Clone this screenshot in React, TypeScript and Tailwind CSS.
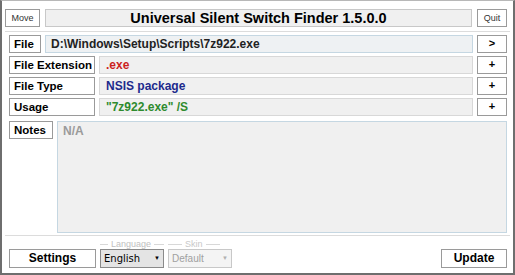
import React from "react";

const font = { fontFamily: '"Liberation Sans", Arial, sans-serif' };

const Label = ({ text, w }: { text: string; w: string }) => (
    <div className={`${w} h-[18px] shrink-0 whitespace-nowrap border border-[#9a9a9a] bg-white px-[4px] text-[11.5px] font-bold leading-[16px] text-black`}>
        {text}
    </div>
);

const SmallBtn = ({ text }: { text: string }) => (
    <div className="w-[30px] h-[18px] shrink-0 border border-[#9a9a9a] bg-white text-center text-[11px] font-bold leading-[15px] text-black">
        {text}
    </div>
);

const rows = [
    { label: "File Extension", value: ".exe", color: "text-[#cc1f1f]" },
    { label: "File Type", value: "NSIS package", color: "text-[#1c2a8c]" },
    { label: "Usage", value: "\"7z922.exe\" /S", color: "text-[#2e8b2e]" },
];

export default function App() {
    return (
        <div style={font} className="w-[515px] h-[275px] bg-white border-t border-t-[#b8b8b8] border-x-2 border-b-2 border-[#6e6e6e] flex flex-col">
            {/* title bar */}
            <div className="flex items-center gap-[5px] pl-[3px] pr-[6px] pt-[8px]">
                <div className="w-[35px] h-[18px] border border-[#9a9a9a] bg-white text-center text-[9px] leading-[16px] text-[#333]">Move</div>
                <div className="flex-1 h-[18px] border border-[#c8c8c8] bg-[#f0f0f0] text-center text-[14.5px] font-bold leading-[16px] text-black">
                    Universal Silent Switch Finder 1.5.0.0
                </div>
                <div className="w-[30px] h-[18px] border border-[#9a9a9a] bg-white text-center text-[9px] leading-[16px] text-[#333]">Quit</div>
            </div>
            <div className="mx-[3px] mt-[4px] border-t border-[#dcdcdc]"></div>

            {/* fields */}
            <div className="flex flex-col gap-[3px] pl-[7px] pr-[6px] pt-[3px]">
                <div className="flex items-center gap-[4px]">
                    <Label text="File" w="w-[32px]" />
                    <div className="flex-1 h-[18px] border border-[#c5d7e2] bg-[#eef1f3] px-[5px] text-[12px] font-bold leading-[16px] text-[#222]">
                        D:\Windows\Setup\Scripts\7z922.exe
                    </div>
                    <SmallBtn text=">" />
                </div>
                {rows.map((r, i) => (
                    <div key={i} className="flex items-center gap-[4px]">
                        <Label text={r.label} w="w-[86px]" />
                        <div className={`flex-1 h-[18px] border border-[#d8d8d8] bg-[#f0f0f0] px-[6px] text-[12px] font-bold leading-[16px] ${r.color}`}>
                            {r.value}
                        </div>
                        <SmallBtn text="+" />
                    </div>
                ))}
                <div className="flex gap-[4px] mt-[2px]">
                    <Label text="Notes" w="w-[44px]" />
                    <div className="flex-1 h-[112px] border border-[#c5d7e2] bg-[#f0f0f0] px-[5px] pt-[1px] text-[12px] font-bold leading-[16px] text-[#9a9a9a]">
                        N/A
                    </div>
                </div>
            </div>
            <div className="mx-[3px] mt-[2px] border-t border-[#dcdcdc]"></div>

            {/* bottom bar */}
            <div className="flex items-end pl-[7px] pr-[6px] mt-[5px]">
                <div className="w-[87px] h-[19px] border border-[#9a9a9a] bg-white text-center text-[12px] font-bold leading-[17px] text-black">Settings</div>
                <div className="ml-[4px] flex flex-col">
                    <div className="flex items-center gap-[3px] h-[7px] text-[9px] text-[#c0c0c0]">
                        <div className="w-[8px] border-t border-[#d8d8d8]"></div>
                        <span>Language</span>
                        <div className="w-[10px] border-t border-[#d8d8d8]"></div>
                    </div>
                    <div className="mt-[1px] w-[64px] h-[19px] border border-[#8a8a8a] bg-[#e4e4e4] flex items-center justify-between px-[3px] text-black">
                        <span style={{ fontFamily: '"DejaVu Sans", sans-serif', fontSize: "10px" }}>English</span>
                        <span className="text-[6px]">▼</span>
                    </div>
                </div>
                <div className="ml-[4px] flex flex-col">
                    <div className="flex items-center gap-[3px] h-[7px] text-[9px] text-[#c8c8c8]">
                        <div className="w-[14px] border-t border-[#d8d8d8]"></div>
                        <span>Skin</span>
                        <div className="w-[14px] border-t border-[#d8d8d8]"></div>
                    </div>
                    <div className="mt-[1px] w-[64px] h-[19px] border border-[#c8c8c8] bg-[#f4f4f4] flex items-center justify-between px-[3px] text-[10px] text-[#a0a0a0]">
                        <span>Default</span>
                        <span className="text-[6px] text-[#b0b0b0]">▼</span>
                    </div>
                </div>
                <div className="flex-1"></div>
                <div className="w-[66px] h-[19px] border border-[#9a9a9a] bg-white text-center text-[12px] font-bold leading-[17px] text-black">Update</div>
            </div>
        </div>
    );
}
